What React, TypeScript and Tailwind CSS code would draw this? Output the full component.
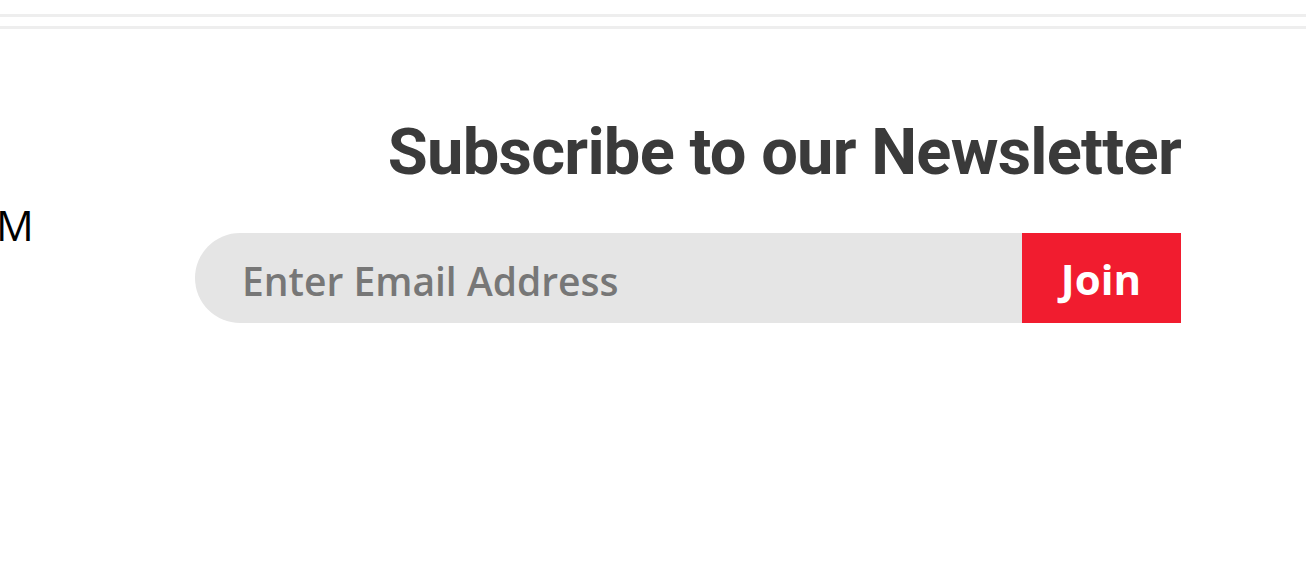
import React from "react";

export default function App() {
  return (
    <div className="w-[1306px] h-[571px] bg-white overflow-hidden">
      <div className="h-[14px]" />
      <div className="h-[3px] bg-[#eeeeee]" />
      <div className="h-[9px]" />
      <div className="h-[3px] bg-[#eeeeee]" />
      <div className="flex">
        <div className="w-[195px] shrink-0 pt-[167px] overflow-hidden">
          <p
            className="-ml-[4px] text-[42px] leading-[57px] text-black"
            style={{ fontFamily: "'Open Sans', sans-serif" }}
          >
            M
          </p>
        </div>
        <div className="flex-1 flex flex-col items-end pr-[125px] pt-[87px]">
          <h2
            className="text-[65px] leading-[72px] font-bold text-[#3a3a3a] tracking-[-0.75px] whitespace-nowrap"
            style={{ fontFamily: "Roboto, sans-serif" }}
          >
            Subscribe to our Newsletter
          </h2>
          <form
            className="mt-[45px] flex w-[986px] h-[90px]"
            onSubmit={(e) => e.preventDefault()}
          >
            <input
              type="email"
              placeholder="Enter Email Address"
              className="flex-1 min-w-0 h-full rounded-l-[45px] bg-[#e5e5e5] pl-[47px] pt-[4px] text-[39px] font-semibold text-[#333] placeholder:text-[#777777] outline-none"
              style={{ fontFamily: "'Open Sans', sans-serif" }}
            />
            <button
              type="submit"
              className="w-[159px] h-full shrink-0 bg-[#f11c2f] text-white text-[42px] font-bold pr-[1px]"
              style={{ fontFamily: "'Open Sans', sans-serif" }}
            >
              Join
            </button>
          </form>
        </div>
      </div>
    </div>
  );
}
